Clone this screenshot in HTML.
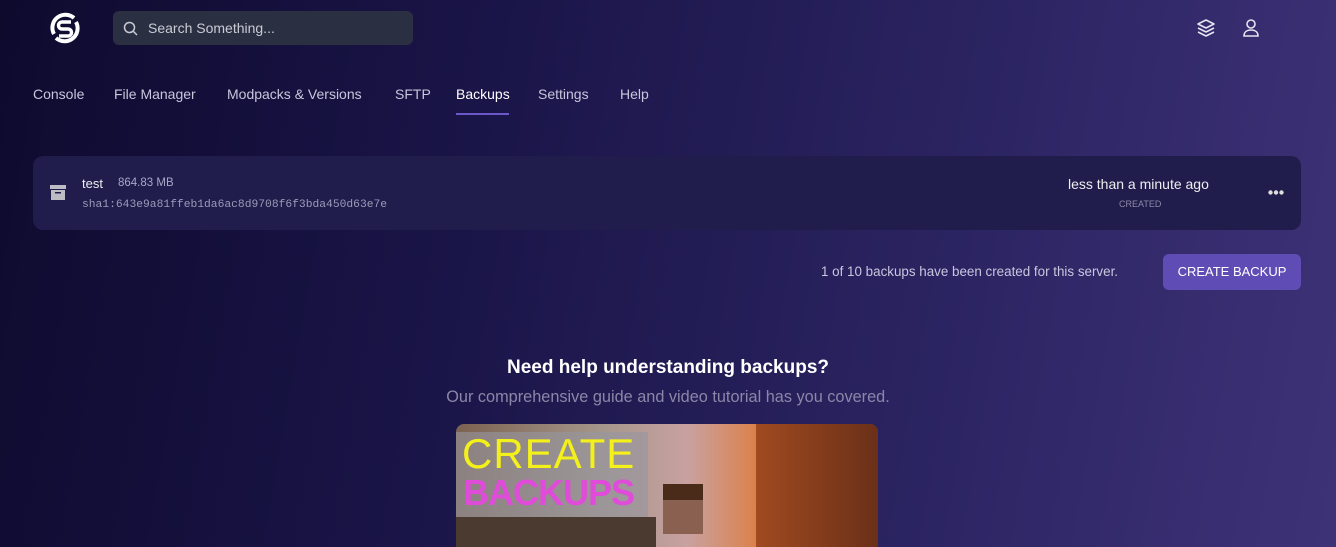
<!DOCTYPE html>
<html><head><meta charset="utf-8"><style>
*{margin:0;padding:0;box-sizing:border-box}
html,body{width:1336px;height:547px;overflow:hidden}
body{font-family:"Liberation Sans",sans-serif;background:linear-gradient(100deg,#0e0a2e 0%,#1a1548 35%,#2b2462 70%,#3e3277 100%);color:#e8e6f0;position:relative}
.abs{position:absolute}
.search{left:113px;top:11px;width:300px;height:34px;border-radius:6px;background:#2b2f42}
.search span{position:absolute;left:35px;top:9px;font-size:14px;color:#c9cbd4}
.tab{position:absolute;top:86px;font-size:14px;color:#c8c6dc}
.card{left:33px;top:156px;width:1268px;height:74px;border-radius:10px;background:#201c4c}
.btn{left:1163px;top:254px;width:138px;height:36px;border-radius:6px;background:#5f4db5;color:#fff;font-size:13px;text-align:center;line-height:36px}
</style></head><body>
<svg class="abs" style="left:49px;top:12px" width="32" height="32" viewBox="0 0 32 32"><path d="M25 6A13 13 0 0 0 5 22" fill="none" stroke="#fff" stroke-width="4"/><path d="M7 26A13 13 0 0 0 27 10" fill="none" stroke="#fff" stroke-width="4"/><path d="M22 10H13a3.5 3.5 0 0 0 0 7h6a3.5 3.5 0 0 1 0 7H10" fill="none" stroke="#fff" stroke-width="3.5"/></svg>
<div class="abs search"><svg class="abs" style="left:10px;top:10px" width="15" height="15" viewBox="0 0 15 15"><circle cx="6.5" cy="6.5" r="5" fill="none" stroke="#c9cbd4" stroke-width="1.5"/><path d="M10.5 10.5L14 14" stroke="#c9cbd4" stroke-width="1.5"/></svg><span>Search Something...</span></div>
<svg class="abs" style="left:1196px;top:18px" width="20" height="20" viewBox="0 0 20 20" fill="none" stroke="#e6e4f0" stroke-width="1.6" stroke-linejoin="round"><path d="M10 2L2 6l8 4 8-4z"/><path d="M2 10l8 4 8-4"/><path d="M2 14l8 4 8-4"/></svg>
<svg class="abs" style="left:1241px;top:18px" width="20" height="20" viewBox="0 0 20 20" fill="none" stroke="#e6e4f0" stroke-width="1.6"><circle cx="10" cy="6" r="4"/><path d="M3 18c0-4 3-6 7-6s7 2 7 6z"/></svg>
<div class="tab" style="left:33px">Console</div>
<div class="tab" style="left:114px">File Manager</div>
<div class="tab" style="left:227px">Modpacks &amp; Versions</div>
<div class="tab" style="left:395px">SFTP</div>
<div class="tab" style="left:456px;color:#fff">Backups</div>
<div class="abs" style="left:456px;top:113px;width:53px;height:2px;background:#6b58c8"></div>
<div class="tab" style="left:538px">Settings</div>
<div class="tab" style="left:620px">Help</div>
<div class="abs card">
<svg class="abs" style="left:17px;top:29px" width="16" height="16" viewBox="0 0 16 16"><rect x="0" y="0" width="16" height="4" fill="#bdbcc4"/><rect x="1" y="5" width="14" height="10" fill="#bdbcc4"/><rect x="5" y="7" width="6" height="1.5" fill="#201c4c"/></svg>
<div class="abs" style="left:49px;top:20px;font-size:13px;color:#eee">test</div>
<div class="abs" style="left:85px;top:21px;font-size:11.5px;color:#a9a7c8">864.83 MB</div>
<div class="abs" style="left:49px;top:43px;font-size:11.3px;font-family:'Liberation Mono',monospace;color:#9a9cb8">sha1:643e9a81ffeb1da6ac8d9708f6f3bda450d63e7e</div>
<div class="abs" style="left:1035px;top:20px;font-size:14px;color:#eee">less than a minute ago</div>
<div class="abs" style="left:1086px;top:43px;font-size:9px;color:#8c8aa8">CREATED</div>
<svg class="abs" style="left:1235px;top:34px" width="16" height="5" viewBox="0 0 16 5"><circle cx="2.5" cy="2.5" r="2.2" fill="#ddd"/><circle cx="8" cy="2.5" r="2.2" fill="#ddd"/><circle cx="13.5" cy="2.5" r="2.2" fill="#ddd"/></svg>
</div>
<div class="abs" style="left:821px;top:264px;font-size:13.4px;color:#c9c6df">1 of 10 backups have been created for this server.</div>
<div class="abs btn">CREATE BACKUP</div>
<div class="abs" style="left:0;width:1336px;top:357px;text-align:center;font-size:19px;font-weight:bold;color:#fff">Need help understanding backups?</div>
<div class="abs" style="left:0;width:1336px;top:388px;text-align:center;font-size:16.3px;color:#8b87a8">Our comprehensive guide and video tutorial has you covered.</div>
<div class="abs" style="left:456px;top:424px;width:422px;height:123px;border-radius:8px 8px 0 0;overflow:hidden;background:linear-gradient(90deg,#7c6250 0%,#a5978c 35%,#c9a1a0 55%,#e07a35 75%,#8b3f1d 100%)">
<div class="abs" style="left:300px;top:0;width:122px;height:140px;background:linear-gradient(90deg,#a04a20,#6a3018)"></div>
<div class="abs" style="left:0;top:8px;width:192px;height:85px;background:rgba(150,150,160,.6)"></div>
<div class="abs" style="left:6px;top:6px;font-size:42px;color:#f4f01a;letter-spacing:1px">CREATE</div>
<div class="abs" style="left:7px;top:48px;font-size:36px;font-weight:bold;color:#e04bd9;letter-spacing:-1px">BACKUPS</div>
<div class="abs" style="left:0;top:93px;width:200px;height:40px;background:#4a3a30"></div>
<div class="abs" style="left:207px;top:60px;width:40px;height:50px;background:#8a6050"></div>
<div class="abs" style="left:207px;top:60px;width:40px;height:16px;background:#4a2a18"></div>
</div>
</body></html>
